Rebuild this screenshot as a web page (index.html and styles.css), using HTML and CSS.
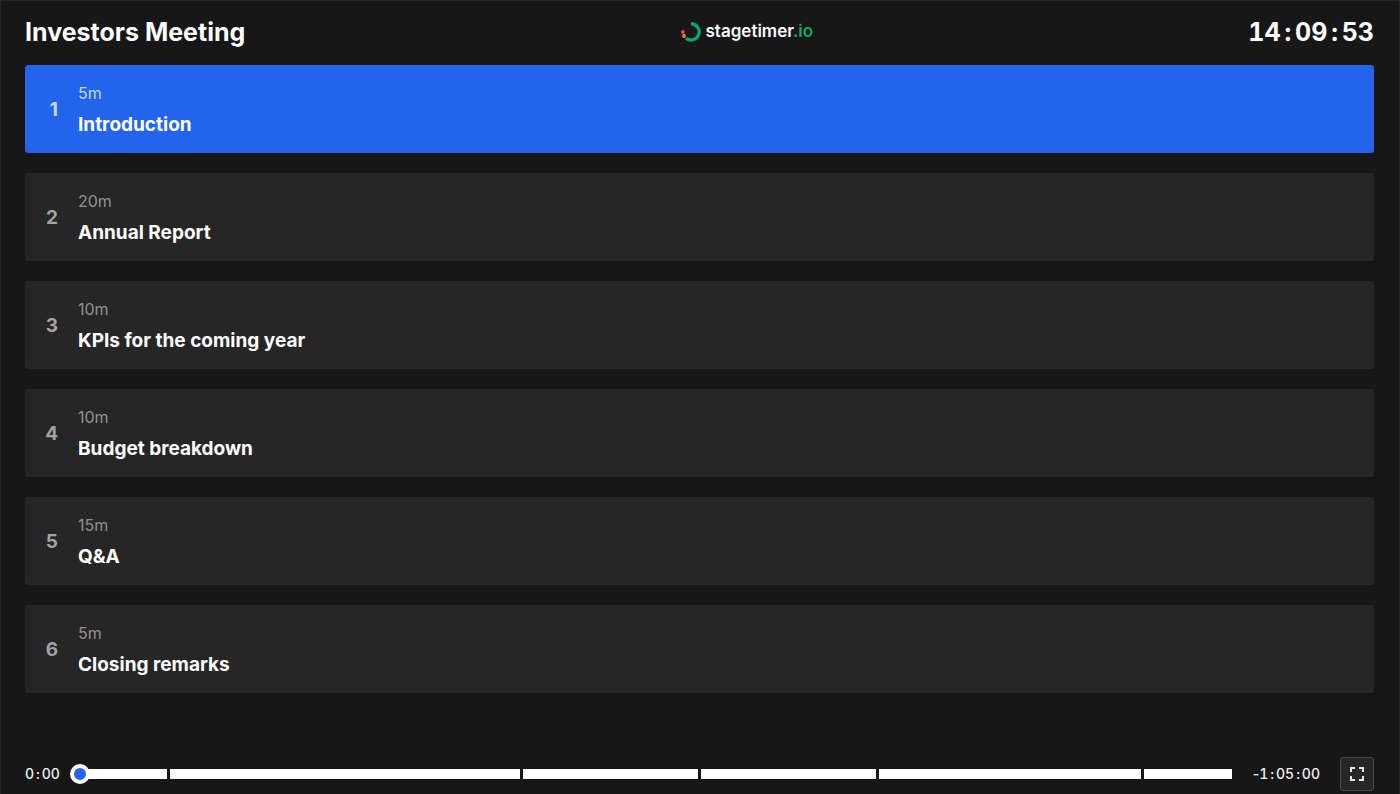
FILE: index.html
```html
<!DOCTYPE html>
<html lang="en">
<head>
<meta charset="utf-8">
<title>Investors Meeting</title>
<link rel="stylesheet" href="styles.css">
</head>
<body>
<div class="page">
  <header class="header">
    <h1 class="title">Investors Meeting</h1>
    <a class="brand" href="#">
      <svg class="brand-mark" viewBox="0 0 20 20" aria-hidden="true">
        <path d="M10 1.8A8.1 8.1 0 1 1 5 16.2" fill="none" stroke="#10a36a" stroke-width="3.4"/>
        <circle cx="1.9" cy="10" r="1.9" fill="#ef4444"/>
        <circle cx="3" cy="14" r="1.9" fill="#f28a1c"/>
      </svg>
      <span class="brand-name">stagetimer<span class="brand-tld">.io</span></span>
    </a>
    <time class="clock">14<span class="cell">:</span>09<span class="cell">:</span>53</time>
  </header>

  <main>
    <ol class="agenda">
      <li class="item item-active"><span class="number">1</span><div><p class="duration">5m</p><h2 class="name">Introduction</h2></div></li>
      <li class="item"><span class="number">2</span><div><p class="duration">20m</p><h2 class="name">Annual Report</h2></div></li>
      <li class="item"><span class="number">3</span><div><p class="duration">10m</p><h2 class="name">KPIs for the coming year</h2></div></li>
      <li class="item"><span class="number">4</span><div><p class="duration">10m</p><h2 class="name">Budget breakdown</h2></div></li>
      <li class="item"><span class="number">5</span><div><p class="duration">15m</p><h2 class="name">Q&amp;A</h2></div></li>
      <li class="item"><span class="number">6</span><div><p class="duration">5m</p><h2 class="name">Closing remarks</h2></div></li>
    </ol>
  </main>

  <footer class="footer">
    <span class="time">0<span class="cell">:</span>00</span>
    <div class="timeline">
      <div class="segments">
        <span style="flex-grow:5"></span>
        <span style="flex-grow:20"></span>
        <span style="flex-grow:10"></span>
        <span style="flex-grow:10"></span>
        <span style="flex-grow:15"></span>
        <span style="flex-grow:5"></span>
      </div>
      <input class="seek" type="range" min="0" max="3900" value="0" aria-label="Elapsed time">
    </div>
    <span class="time"><span class="cell">-</span>1<span class="cell">:</span>05<span class="cell">:</span>00</span>
    <button class="fullscreen" type="button" aria-label="Fullscreen">
      <svg viewBox="0 0 14 14" width="14" height="14" fill="none" stroke="currentColor" stroke-width="2" aria-hidden="true">
        <path d="M1 5V1h4M9 1h4v4M13 9v4H9M5 13H1V9"/>
      </svg>
    </button>
  </footer>
</div>
</body>
</html>
```
FILE: styles.css
```css
* {
  box-sizing: border-box;
}

body {
  margin: 0;
  background: #171717;
  color: #fff;
  font-family: Inter, "Liberation Sans", sans-serif;
}

h1, h2, p, ol {
  margin: 0;
  padding: 0;
}

.page {
  display: flex;
  flex-direction: column;
  min-height: 100vh;
  padding: 0 25px 3px 24px;
  border: 1px solid #242424;
  border-bottom: 0;
}

.header {
  display: flex;
  align-items: center;
  justify-content: space-between;
  height: 64px;
  padding-bottom: 2px;
}

.title {
  font-size: 25px;
  font-weight: 700;
  line-height: 32px;
}

.brand {
  display: flex;
  align-items: flex-start;
  gap: 5px;
  color: #fff;
  text-decoration: none;
}

.brand-mark {
  width: 20px;
  height: 20px;
}

.brand-name {
  font-size: 17px;
  font-weight: 600;
  line-height: 18px;
}

.brand-tld {
  color: #10a36a;
}

.clock {
  font-size: 25px;
  font-weight: 700;
  line-height: 32px;
  font-variant-numeric: tabular-nums;
}

.cell {
  display: inline-block;
  width: 0.85ch;
  text-align: center;
}

.agenda {
  display: flex;
  flex-direction: column;
  gap: 20px;
  list-style: none;
}

.item {
  display: grid;
  grid-template-columns: 33px 1fr;
  column-gap: 20px;
  align-items: center;
  height: 88px;
  border-radius: 3px;
  background: #262626;
}

.number {
  color: #a3a3a3;
  font-size: 19px;
  font-weight: 700;
  text-align: right;
}

.duration {
  color: #929292;
  font-size: 16px;
  line-height: 31px;
}

.name {
  font-size: 19px;
  font-weight: 700;
  line-height: 31px;
}

.item-active {
  background: #2463eb;
}

.item-active .number,
.item-active .duration {
  color: #bfdbfe;
}

.footer {
  display: flex;
  align-items: center;
  margin-top: auto;
  gap: 20px;
}

.time {
  color: #f0f0f0;
  font-size: 14px;
  font-weight: 500;
  line-height: 20px;
  font-variant-numeric: tabular-nums;
}

.timeline {
  position: relative;
  flex: 1;
}

.segments {
  display: flex;
  gap: 3px;
  height: 10px;
}

.segments span {
  flex-basis: 0;
  background: #fff;
}

.seek {
  position: absolute;
  inset: -5px -10px;
  width: calc(100% + 20px);
  height: 20px;
  margin: 0;
  appearance: none;
  background: transparent;
}

.seek::-webkit-slider-thumb {
  appearance: none;
  width: 20px;
  height: 20px;
  border: 4px solid #fff;
  border-radius: 50%;
  background: #2463eb;
}

.fullscreen {
  display: grid;
  place-items: center;
  width: 34px;
  height: 34px;
  padding: 0;
  border: 1px solid #484848;
  border-radius: 3px;
  background: #262626;
  color: #e5e5e5;
}
```
